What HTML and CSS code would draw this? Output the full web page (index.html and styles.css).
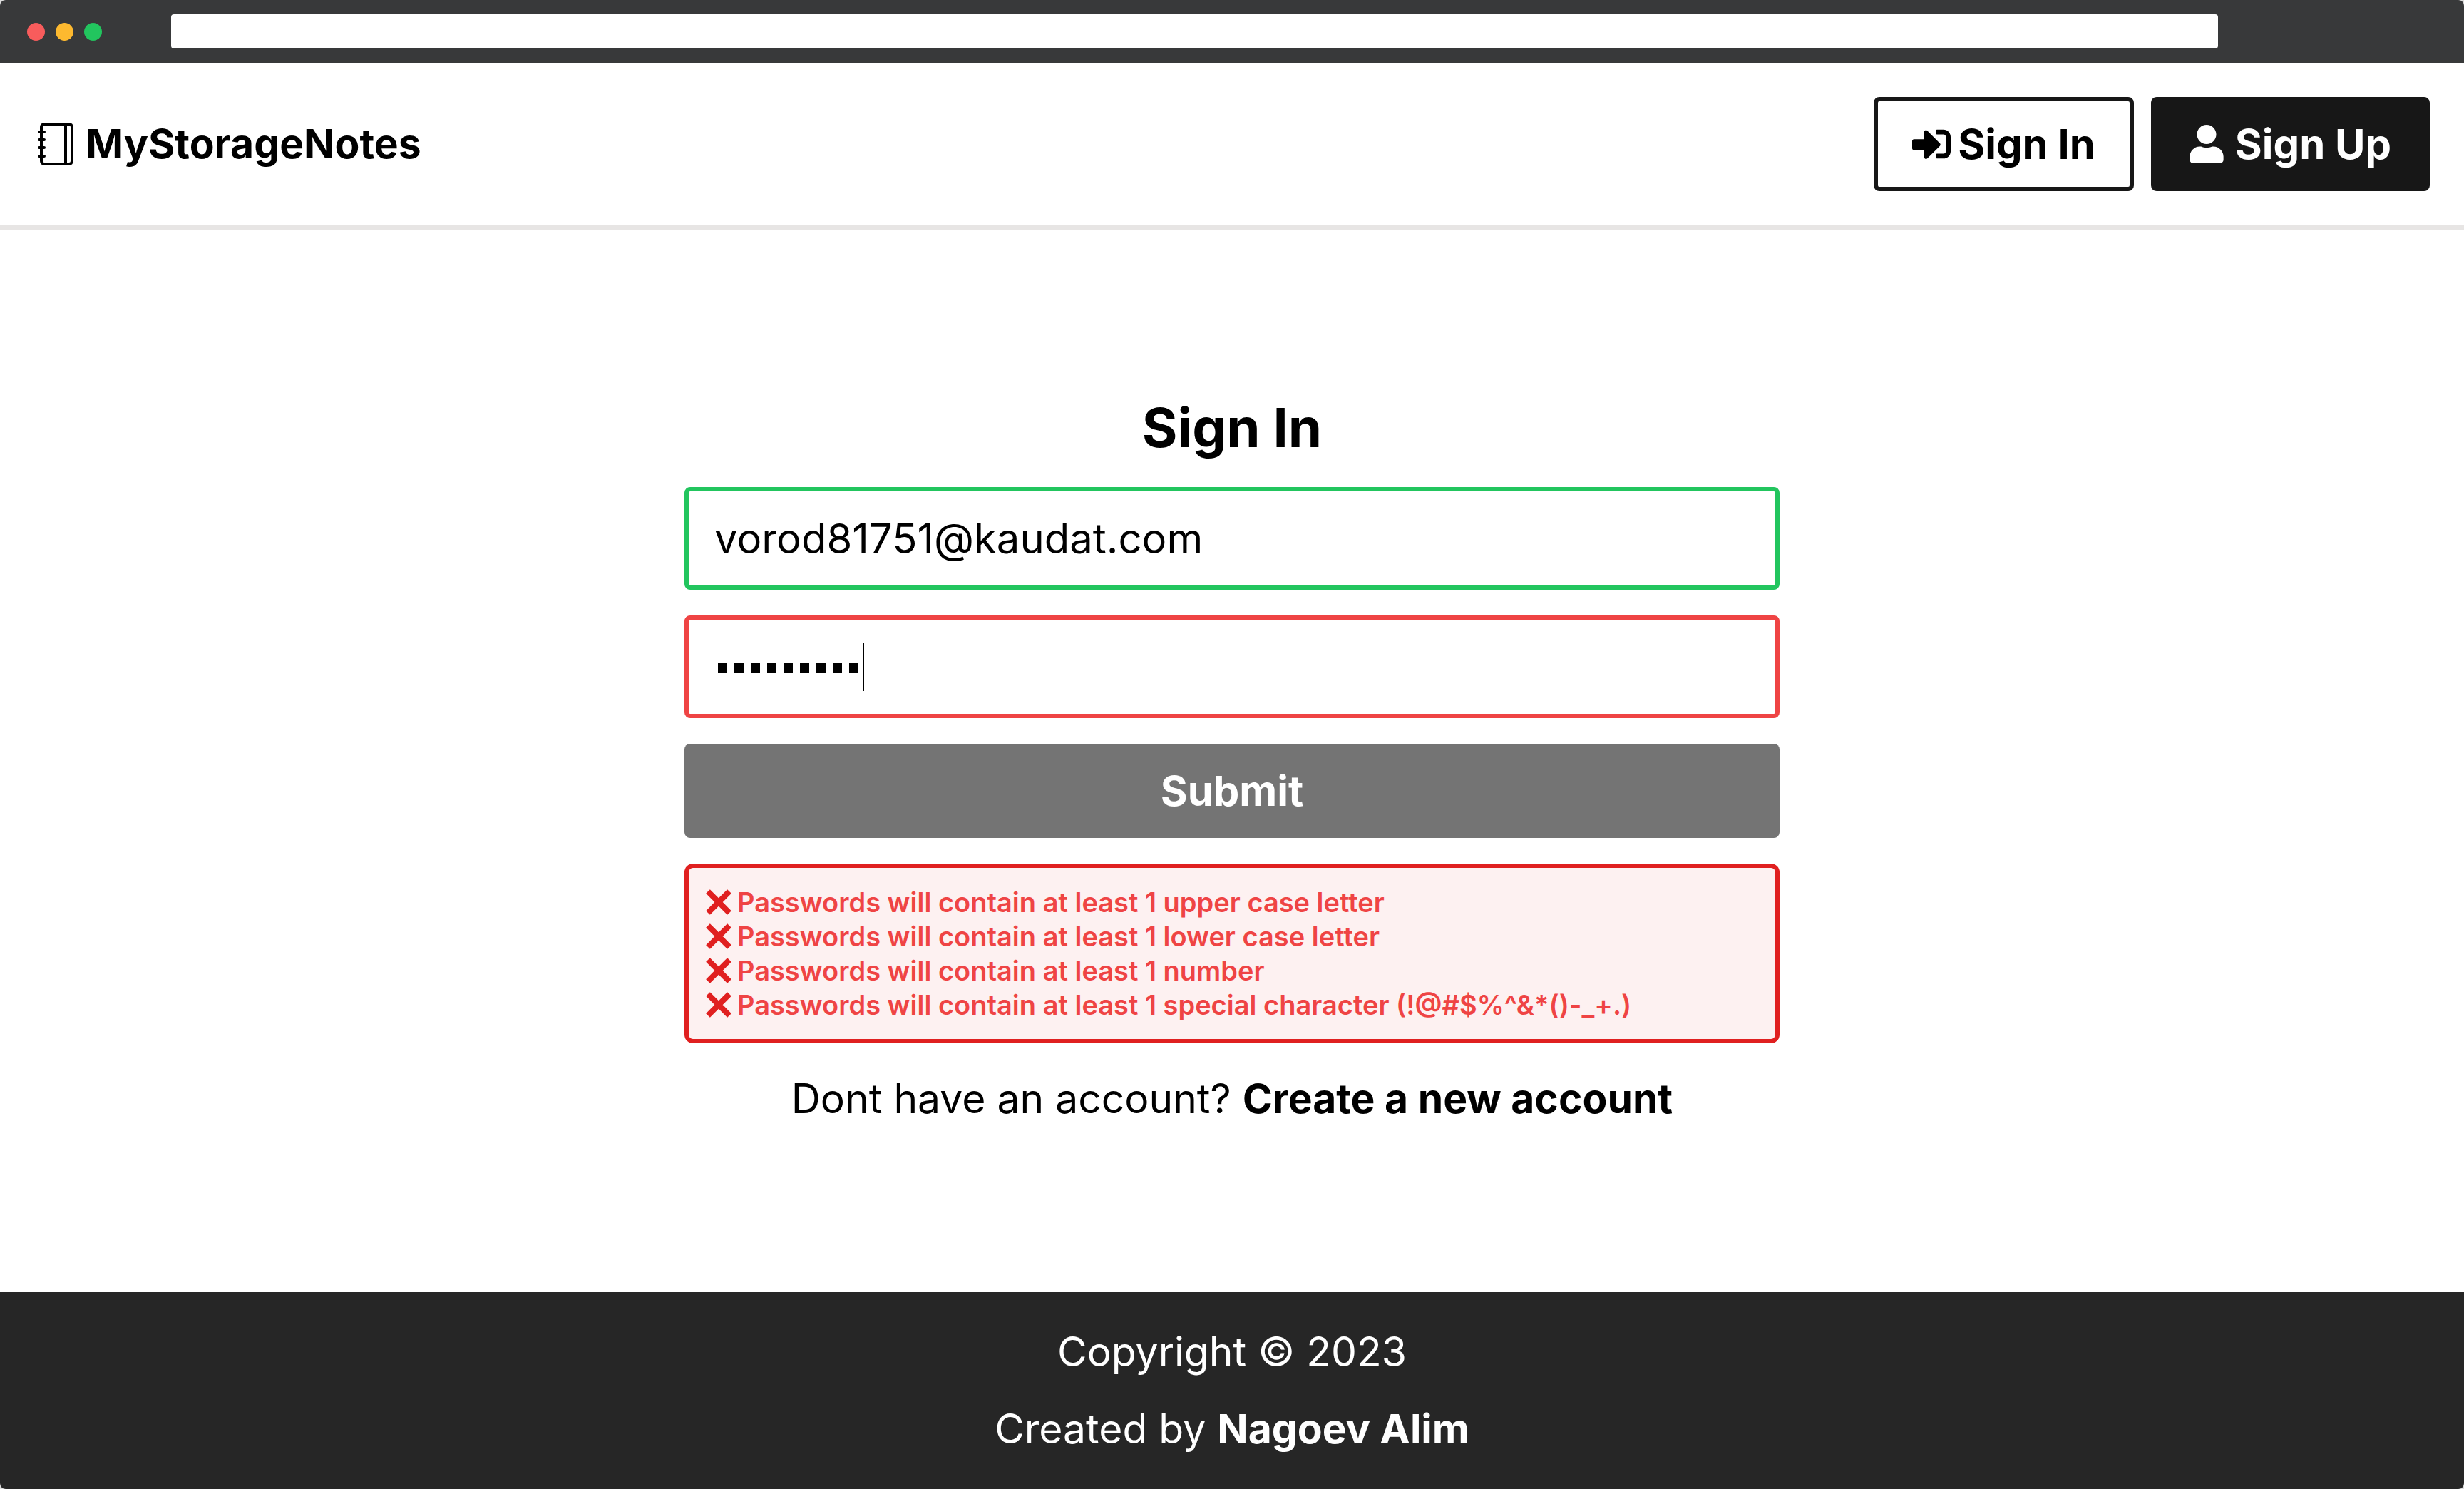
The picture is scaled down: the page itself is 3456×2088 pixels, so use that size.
FILE: index.html
```html
<!DOCTYPE html>
<html lang="en">
<head>
<meta charset="utf-8">
<title>MyStorageNotes</title>
<link rel="stylesheet" href="styles.css">
</head>
<body>
<div class="window">
  <div class="titlebar">
    <div class="lights">
      <span class="light light-red"></span>
      <span class="light light-yellow"></span>
      <span class="light light-green"></span>
    </div>
    <input class="address" type="text" aria-label="Address">
  </div>

  <header class="header">
    <a class="brand" href="#">
      <svg class="icon-brand" viewBox="0 0 52 60" fill="none" stroke="currentColor" stroke-width="4" stroke-linecap="round" aria-hidden="true">
        <rect x="6" y="2" width="43" height="56" rx="4"/>
        <path d="M40 2v56M3 13h7M3 24h7M3 35h7M3 47h7"/>
      </svg>
      MyStorageNotes
    </a>
    <nav class="nav">
      <a class="btn btn-outline" href="#">
        <svg class="icon-signin" viewBox="0 0 512 512" fill="currentColor" aria-hidden="true"><path d="M416 448h-84c-6.6 0-12-5.4-12-12v-40c0-6.6 5.4-12 12-12h84c17.7 0 32-14.3 32-32V160c0-17.7-14.3-32-32-32h-84c-6.6 0-12-5.4-12-12V76c0-6.6 5.4-12 12-12h84c53 0 96 43 96 96v192c0 53-43 96-96 96zm-47-201L201 79c-15-15-41-4.5-41 17v96H24c-13.3 0-24 10.7-24 24v96c0 13.3 10.7 24 24 24h136v96c0 21.5 26 32 41 17l168-168c9.3-9.4 9.3-24.6 0-34z"/></svg>
        Sign In
      </a>
      <a class="btn btn-dark" href="#">
        <svg class="icon-user" viewBox="0 0 448 512" fill="currentColor" aria-hidden="true"><path d="M224 256c70.7 0 128-57.3 128-128S294.7 0 224 0 96 57.3 96 128s57.3 128 128 128zm89.6 32h-16.7c-22.2 10.2-46.9 16-72.9 16s-50.6-5.8-72.9-16h-16.7C60.2 288 0 348.2 0 422.4V464c0 26.5 21.5 48 48 48h352c26.5 0 48-21.5 48-48v-41.6c0-74.2-60.2-134.4-134.4-134.4z"/></svg>
        Sign Up
      </a>
    </nav>
  </header>

  <main class="main">
    <form class="form">
      <h1 class="title">Sign In</h1>
      <input class="field field-valid" type="email" aria-label="Email" value="vorod81751@kaudat.com">
      <div class="password">
        <input class="field field-invalid field-password" type="password" aria-label="Password" value="123456789">
        <span class="caret"></span>
      </div>
      <button class="submit" type="submit" disabled>Submit</button>
      <ul class="errors">
        <li class="error"><svg class="icon-cross" viewBox="0 0 36 36" aria-hidden="true"><path d="M3 3L33 33M33 3L3 33"/></svg>Passwords will contain at least 1 upper case letter</li>
        <li class="error"><svg class="icon-cross" viewBox="0 0 36 36" aria-hidden="true"><path d="M3 3L33 33M33 3L3 33"/></svg>Passwords will contain at least 1 lower case letter</li>
        <li class="error"><svg class="icon-cross" viewBox="0 0 36 36" aria-hidden="true"><path d="M3 3L33 33M33 3L3 33"/></svg>Passwords will contain at least 1 number</li>
        <li class="error"><svg class="icon-cross" viewBox="0 0 36 36" aria-hidden="true"><path d="M3 3L33 33M33 3L3 33"/></svg>Passwords will contain at least 1 special character (!@#$%^&amp;*()-_+.)</li>
      </ul>
      <p class="switch">Dont have an account? <a class="link" href="#">Create a new account</a></p>
    </form>
  </main>

  <footer class="footer">
    <p>Copyright © 2023</p>
    <p>Created by <a class="link" href="#">Nagoev Alim</a></p>
  </footer>
</div>
</body>
</html>
```
FILE: styles.css
```css
* {
  box-sizing: border-box;
  margin: 0;
  padding: 0;
}

body {
  background: #dcdcdc;
  color: #000;
  font-family: Inter, "Liberation Sans", sans-serif;
  font-size: 57px;
  line-height: 72px;
}

a {
  color: inherit;
  text-decoration: none;
}

input,
button {
  font: inherit;
  color: inherit;
}

.window {
  display: flex;
  flex-direction: column;
  min-height: 100vh;
  overflow: hidden;
  border-radius: 8px;
  background: #fff;
}

.titlebar {
  display: flex;
  align-items: center;
  gap: 97px;
  height: 88px;
  padding: 0 345px 0 38px;
  background: #38393a;
}

.lights {
  display: flex;
  gap: 15px;
}

.light {
  width: 25px;
  height: 25px;
  border-radius: 50%;
}

.light-red { background: #f85c5c; }
.light-yellow { background: #fdb92f; }
.light-green { background: #22c55e; }

.address {
  flex: 1;
  height: 48px;
  border: 0;
  border-radius: 4px;
  background: #fff;
}

.header {
  display: flex;
  align-items: center;
  justify-content: space-between;
  padding: 48px;
  border-bottom: 6px solid #e7e5e4;
}

.brand {
  display: flex;
  align-items: center;
  gap: 16px;
  padding-left: 4px;
  font-weight: 700;
}

.icon-brand {
  width: 52px;
  height: 60px;
}

.nav {
  display: flex;
  gap: 24px;
}

.btn {
  display: flex;
  align-items: center;
  gap: 10px;
  padding: 24px 48px;
  border: 6px solid #171717;
  border-radius: 8px;
  font-size: 58px;
  font-weight: 700;
}

.btn-dark {
  gap: 16px;
  background: #171717;
  color: #fff;
}

.icon-signin {
  width: 54px;
  height: 54px;
}

.icon-user {
  width: 48px;
  height: 54px;
}

.main {
  display: flex;
  flex: 1;
  align-items: center;
  justify-content: center;
}

.form {
  display: flex;
  flex-direction: column;
  gap: 36px;
  width: 1536px;
  max-width: 100%;
}

.title {
  font-size: 76px;
  line-height: 96px;
  text-align: center;
}

.field {
  display: block;
  width: 100%;
  height: 144px;
  padding: 0 36px;
  border: 6px solid;
  border-radius: 8px;
  background: #fff;
  font-size: 58px;
  outline: 0;
}

.field-valid { border-color: #22c55e; }
.field-invalid { border-color: #ef4444; }

.password {
  position: relative;
}

.field-password {
  background: repeating-linear-gradient(90deg, #000 0 13px, #fff 13px 23px) 41px 61px / 197px 14px no-repeat #fff;
  color: transparent;
}

.caret {
  position: absolute;
  top: 38px;
  left: 250px;
  width: 2px;
  height: 68px;
  background: #000;
}

.submit {
  padding: 30px;
  border: 0;
  border-radius: 8px;
  background: #747474;
  color: #fff;
  font-size: 58px;
  font-weight: 700;
}

.errors {
  padding: 24px;
  border: 6px solid #e02020;
  border-radius: 12px;
  background: #fdf1f1;
  color: #ef4444;
  font-size: 38px;
  font-weight: 600;
  line-height: 48px;
  list-style: none;
}

.error {
  display: flex;
  align-items: center;
  gap: 8px;
}

.icon-cross {
  width: 36px;
  height: 36px;
  stroke: #e02020;
  stroke-width: 8;
}

.switch {
  line-height: 84px;
  text-align: center;
}

.link {
  font-weight: 700;
}

.footer {
  display: flex;
  flex-direction: column;
  gap: 36px;
  padding: 48px;
  background: #262626;
  color: #fff;
  text-align: center;
}
```
